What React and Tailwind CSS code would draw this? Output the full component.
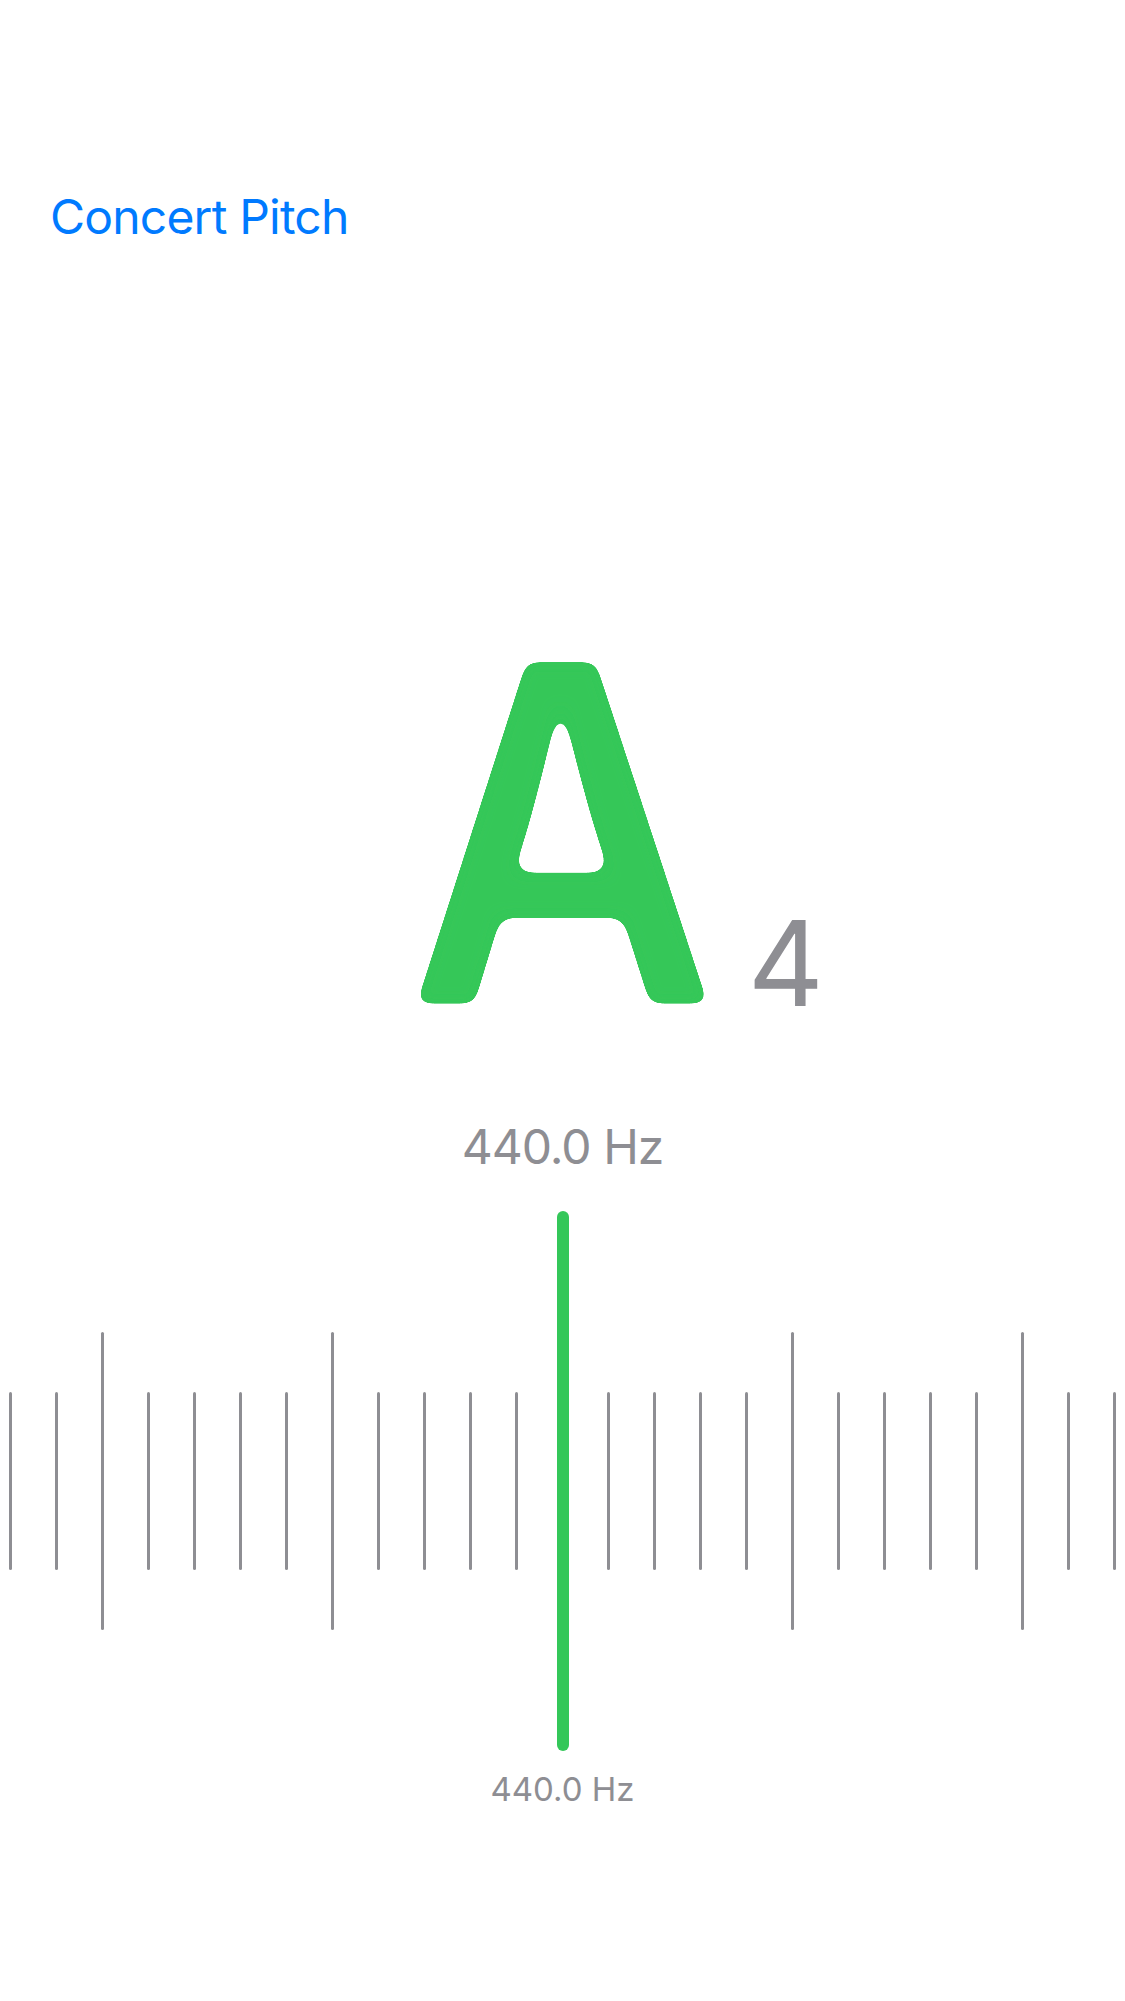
import React from "react";

const TICKS = Array.from({ length: 25 }, (_, i) => i);

// blur + alpha threshold: rounds the outer corners of the note glyph like a rounded face
const RoundFilter = () => (
  <svg className="absolute h-0 w-0" aria-hidden="true">
    <defs>
      <filter id="round-lg" x="-10%" y="-10%" width="120%" height="120%">
        <feGaussianBlur in="SourceGraphic" stdDeviation="8" result="blur" />
        <feColorMatrix
          in="blur"
          mode="matrix"
          values="1 0 0 0 0  0 1 0 0 0  0 0 1 0 0  0 0 0 40 -24.3"
        />
      </filter>
    </defs>
  </svg>
);

const Tuner = () => {
  return (
    <div className="mt-[40px] h-[540px] w-full overflow-hidden">
      <div className="ml-[-12.5px] flex h-full items-center">
        {TICKS.map((k) => (
          <div key={k} className="flex w-[46px] shrink-0 justify-center">
            {k === 12 ? (
              <div className="h-[540px] w-[12px] rounded-full bg-[#34c759]" />
            ) : (
              <div
                className={
                  k % 5 === 2
                    ? "h-[298px] w-[3px] rounded-full bg-[#8e8e93]"
                    : "h-[178px] w-[3px] rounded-full bg-[#8e8e93]"
                }
              />
            )}
          </div>
        ))}
      </div>
    </div>
  );
};

export default function App() {
  return (
    <div className="flex h-[2001px] w-full flex-col bg-white font-['Inter',sans-serif]">
      <RoundFilter />

      {/* nav button */}
      <div className="pl-[50px] pt-[193px]">
        <span className="text-[48px] leading-[48px] tracking-[-0.8px] text-[#007aff]">
          Concert Pitch
        </span>
      </div>

      {/* note name */}
      <div className="mt-[354px] grid grid-cols-[1fr_auto_1fr] items-baseline">
        <div />
        <span className="scale-x-[0.92] text-[476px] font-semibold leading-[476px] text-[#34c759] [filter:url(#round-lg)]">
          A
        </span>
        <span className="pl-[12px] text-[118px] leading-[118px] text-[#8e8e93]">4</span>
      </div>

      {/* detected frequency */}
      <div className="mt-[52px] text-center text-[48px] leading-[48px] tracking-[-1px] text-[#8e8e93]">
        440.0 Hz
      </div>

      <Tuner />

      {/* target frequency */}
      <div className="mt-[22px] text-center text-[33px] leading-[33px] text-[#8e8e93]">
        440.0 Hz
      </div>
    </div>
  );
}
